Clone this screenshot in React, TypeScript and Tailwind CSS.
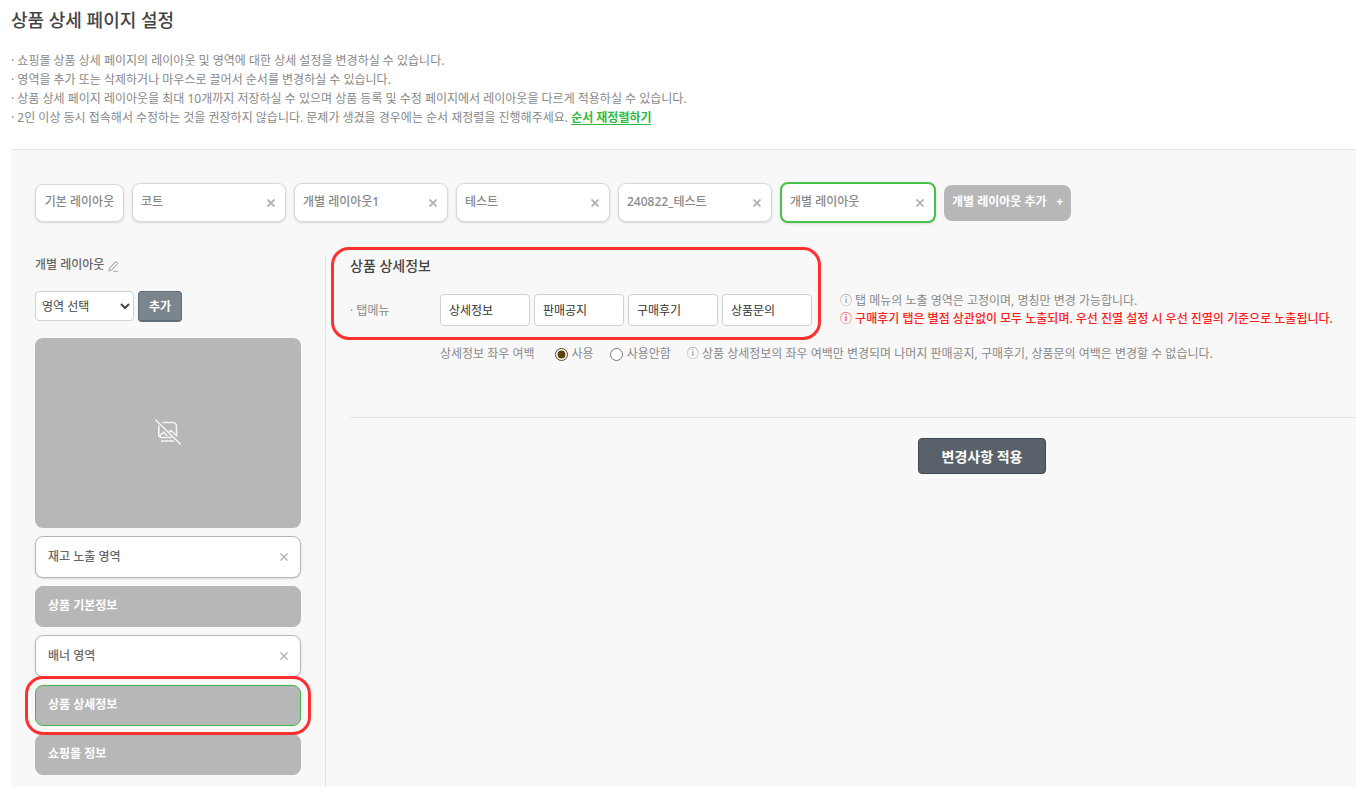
import { useState } from 'react'
import clsx from 'clsx'

const notices = [
  '· 쇼핑몰 상품 상세 페이지의 레이아웃 및 영역에 대한 상세 설정을 변경하실 수 있습니다.',
  '· 영역을 추가 또는 삭제하거나 마우스로 끌어서 순서를 변경하실 수 있습니다.',
  '· 상품 상세 페이지 레이아웃을 최대 10개까지 저장하실 수 있으며 상품 등록 및 수정 페이지에서 레이아웃을 다르게 적용하실 수 있습니다.',
]

const layouts = ['코트', '개별 레이아웃1', '테스트', '240822_테스트', '개별 레이아웃']

const areas = [
  { name: '재고 노출 영역', removable: true },
  { name: '상품 기본정보', removable: false },
  { name: '배너 영역', removable: true },
  { name: '상품 상세정보', removable: false },
  { name: '쇼핑몰 정보', removable: false },
]

const tabNames = ['상세정보', '판매공지', '구매후기', '상품문의']

function CloseIcon({ thin = false }: { thin?: boolean }) {
  return (
    <svg className="h-2 w-2" viewBox="0 0 8 8" fill="none" stroke="currentColor" strokeWidth={thin ? 1.3 : 1.8}>
      <path d="M0.5 0.5l7 7M7.5 0.5l-7 7" />
    </svg>
  )
}

function PencilIcon() {
  return (
    <svg className="h-[11px] w-[11px]" viewBox="0 0 12 12" fill="none" stroke="currentColor" strokeWidth={1.1}>
      <path d="M1 10.8l0.7-3L7.9 1.3a1.1 1.1 0 0 1 1.6 0l0.5 0.5a1.1 1.1 0 0 1 0 1.6L3.9 9.8z" />
      <path d="M5.5 11.2h5.5" />
    </svg>
  )
}

function NoImageIcon() {
  return (
    <svg className="h-7 w-7" viewBox="0 0 28 28" fill="none" stroke="#f3f3f3" strokeWidth={1.6}>
      <path d="M8.5 3.5H19a3.5 3.5 0 0 1 3.5 3.5v10.5" />
      <path d="M4.8 6.5v9a3 3 0 0 0 3 3H18" />
      <path d="M5.5 17l4-3.8 3.8 3.8" />
      <path d="M15 13l2-1.4 5 4.4" />
      <path d="M7 22h13" />
      <path d="M1.5 0.8l25.2 24.7" />
    </svg>
  )
}

function LayoutChip({ name, active }: { name: string; active: boolean }) {
  return (
    <div
      className={clsx(
        'flex items-center justify-between rounded-lg bg-white shadow-sm',
        active
          ? 'h-[41px] w-[156px] border-2 border-[#47c147] px-2'
          : 'h-[39px] w-[154px] border border-[#d9d9d9] px-2'
      )}
    >
      <button type="button" className="pb-0.5 font-medium text-[#888]">{name}</button>
      <button type="button" aria-label={`${name} 삭제`} className="pr-0.5 text-[#b0b0b0]">
        <CloseIcon />
      </button>
    </div>
  )
}

function AreaItem({ name, removable, selected }: { name: string; removable: boolean; selected: boolean }) {
  return (
    <li
      className={clsx(
        'relative flex items-center justify-between rounded-lg border px-3',
        removable ? 'h-[42px] border-[#b7b7b7] bg-white shadow-sm' : 'h-[41px] bg-[#b7b7b7]',
        !removable && (selected ? 'border-[#3cb94a]' : 'border-[#b7b7b7]')
      )}
    >
      <button
        type="button"
        className={clsx('pb-0.5', removable ? 'font-medium text-[#666]' : 'font-bold text-white')}
      >
        {name}
      </button>
      {removable && (
        <button type="button" aria-label={`${name} 삭제`} className="text-[#b0b0b0]">
          <CloseIcon thin />
        </button>
      )}
      {selected && (
        <span className="pointer-events-none absolute -inset-x-[11px] -inset-y-2.5 z-10 rounded-[18px] border-3 border-[#ff3030]" />
      )}
    </li>
  )
}

export default function App() {
  const [useMargin, setUseMargin] = useState(true)

  return (
    <div className="flex min-h-screen flex-col overflow-hidden bg-white pl-[11px] font-['Noto_Sans','Noto_Sans_CJK_KR',sans-serif] text-[12px] leading-[19px] text-[#888]">
      <header>
        <h1 className="pt-1.5 text-[18px] leading-7 font-medium text-[#444]">상품 상세 페이지 설정</h1>
        <div className="mt-[17px]">
          {notices.map((line) => (
            <p key={line}>{line}</p>
          ))}
          <p>
            · 2인 이상 동시 접속해서 수정하는 것을 권장하지 않습니다. 문제가 생겼을 경우에는 순서 재정렬을 진행해주세요.{' '}
            <a href="#reorder" className="font-bold text-[#2fb943] underline underline-offset-2">
              순서 재정렬하기
            </a>
          </p>
        </div>
      </header>

      <main className="mt-[22px] flex grow flex-col border-t border-[#e5e5e5] bg-[#f8f8f8] pl-6">
        <nav className="mt-8 flex items-center gap-2">
          <button
            type="button"
            className="h-[38px] w-[89px] rounded-lg border border-[#d9d9d9] bg-white pb-0.5 font-medium whitespace-nowrap text-[#888] shadow-sm"
          >
            기본 레이아웃
          </button>
          {layouts.map((name, i) => (
            <LayoutChip key={name} name={name} active={i === layouts.length - 1} />
          ))}
          <button
            type="button"
            className="flex h-9 w-[127px] items-center justify-between rounded-lg bg-[#b7b7b7] px-2 pb-0.5 font-bold text-white"
          >
            <span>개별 레이아웃 추가</span>
            <span>+</span>
          </button>
        </nav>

        <div className="mt-8 flex grow">
          <aside className="w-[290px] shrink-0 pr-6">
            <div className="flex items-center gap-1">
              <h2 className="font-medium text-[#666]">개별 레이아웃</h2>
              <button type="button" aria-label="이름 변경" className="pt-1 text-[#aaa]">
                <PencilIcon />
              </button>
            </div>
            <div className="mt-[17px] flex items-start gap-1">
              <select
                aria-label="영역 선택"
                className="h-[30px] w-[99px] rounded-[4px] border border-[#d0d0d0] bg-white px-0.5 text-[#444]"
              >
                <option>영역 선택</option>
              </select>
              <button
                type="button"
                className="h-[31px] w-11 rounded-[4px] border border-b-2 border-[#626c74] bg-[#7b858d] font-bold text-white"
              >
                추가
              </button>
            </div>
            <div className="mt-4 flex h-[190px] items-center justify-center rounded-lg bg-[#b7b7b7]">
              <NoImageIcon />
            </div>
            <ul className="mt-2 flex flex-col gap-2 pb-3">
              {areas.map((area) => (
                <AreaItem key={area.name} {...area} selected={area.name === '상품 상세정보'} />
              ))}
            </ul>
          </aside>

          <section className="min-w-0 grow border-l border-[#e5e5e5] pl-6">
            <div className="flex items-end">
              <div className="relative shrink-0">
                <h2 className="text-[14px] leading-[22px] font-medium text-[#444]">상품 상세정보</h2>
                <div className="mt-[15px] flex h-9 items-center">
                  <span className="w-[90px]">· 탭메뉴</span>
                  <div className="flex gap-1">
                    {tabNames.map((tab) => (
                      <input
                        key={tab}
                        type="text"
                        aria-label={tab}
                        defaultValue={tab}
                        className="h-8 w-[90px] rounded-[4px] border border-[#d0d0d0] bg-white px-2 text-[#333]"
                      />
                    ))}
                  </div>
                </div>
                <span className="pointer-events-none absolute -top-2 -right-[9px] -bottom-3 -left-[19px] rounded-[18px] border-3 border-[#ff3030]" />
              </div>
              <div className="ml-7 leading-[18px] whitespace-nowrap">
                <p>ⓘ 탭 메뉴의 노출 영역은 고정이며, 명칭만 변경 가능합니다.</p>
                <p className="font-medium text-[#ff2020]">
                  ⓘ 구매후기 탭은 별점 상관없이 모두 노출되며. 우선 진열 설정 시 우선 진열의 기준으로 노출됩니다.
                </p>
              </div>
            </div>

            <div className="mt-4 flex items-center pl-[90px] whitespace-nowrap">
              <span>상세정보 좌우 여백</span>
              <label className="ml-5 flex items-center gap-1">
                <input
                  type="radio"
                  name="margin"
                  className="mt-0.5 accent-[#5c4212]"
                  checked={useMargin}
                  onChange={() => setUseMargin(true)}
                />
                사용
              </label>
              <label className="ml-4 flex items-center gap-1">
                <input
                  type="radio"
                  name="margin"
                  className="mt-0.5 accent-[#5c4212]"
                  checked={!useMargin}
                  onChange={() => setUseMargin(false)}
                />
                사용안함
              </label>
              <p className="ml-4">
                ⓘ 상품 상세정보의 좌우 여백만 변경되며 나머지 판매공지, 구매후기, 상품문의 여백은 변경할 수 없습니다.
              </p>
            </div>

            <hr className="mt-[54px] border-[#e5e5e5]" />
            <div className="mt-5 flex justify-center pl-[258px]">
              <button
                type="button"
                className="h-9 w-32 rounded-[4px] border border-[#3e474e] bg-[#59626a] text-[14px] font-bold text-white"
              >
                변경사항 적용
              </button>
            </div>
          </section>
        </div>
      </main>
    </div>
  )
}
